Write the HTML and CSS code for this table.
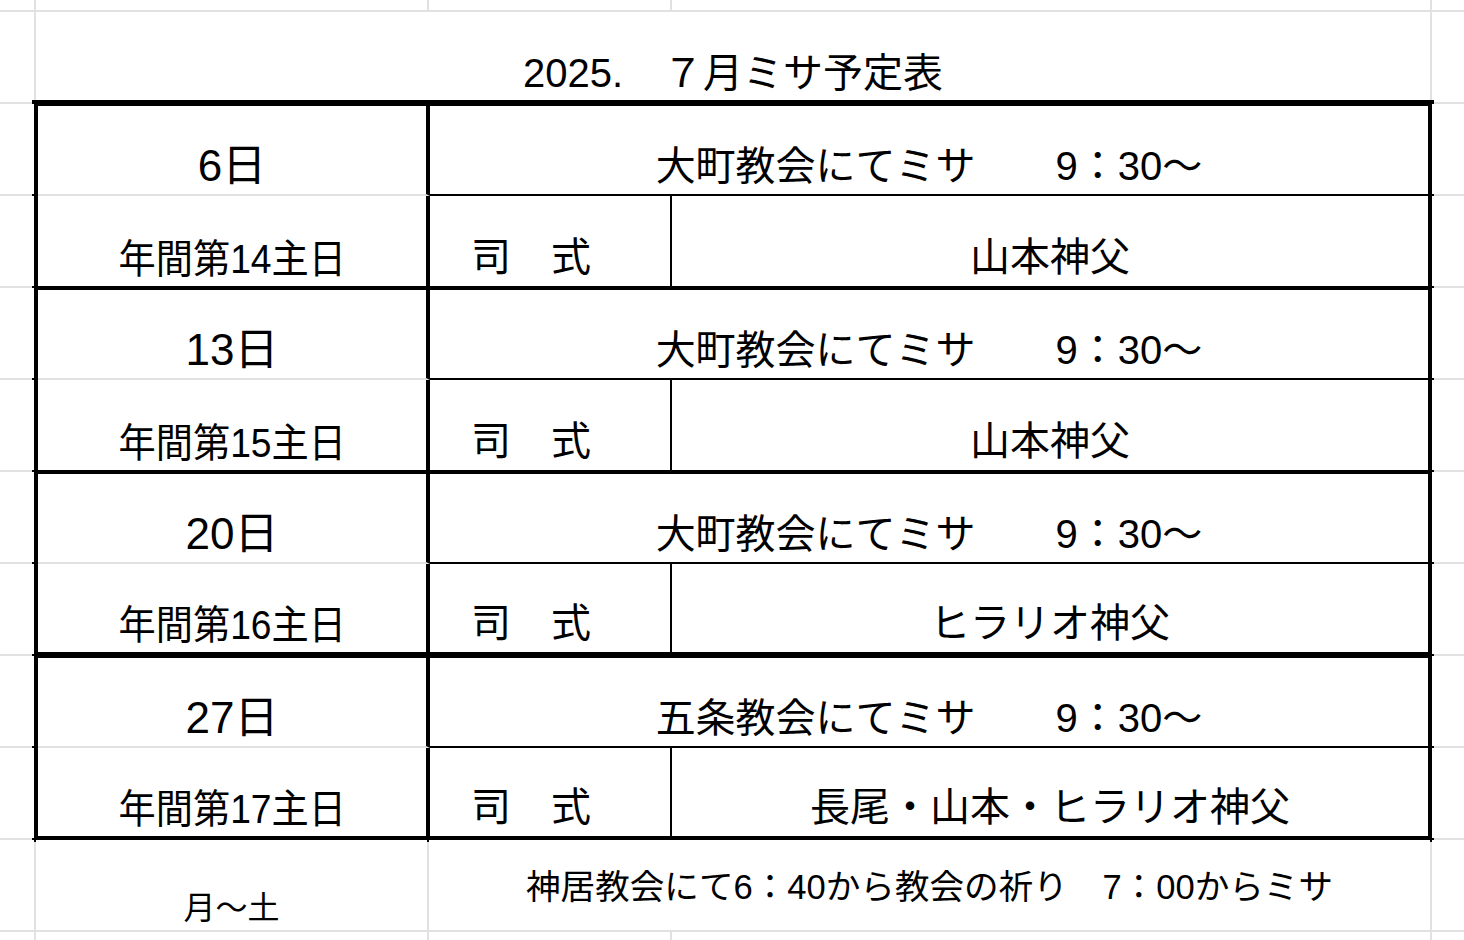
FILE: index.html
```html
<!DOCTYPE html>
<html lang="ja">
<head>
<meta charset="utf-8">
<title>2025. ７月ミサ予定表</title>
<link rel="stylesheet" href="styles.css">
</head>
<body>
<div class="sheet">
  <div class="cell"></div><div class="cell"></div><div class="cell"></div><div class="cell"></div><div class="cell"></div>

  <div class="cell"></div>
  <div class="cell title"><span>2025.　７月ミサ予定表</span></div>
  <div class="cell"></div>

  <div class="schedule">
    <div class="day">
      <div class="date">6日</div>
      <div class="mass">大町教会にてミサ　　9：30～</div>
      <div class="week"><span class="week-text">年間第14主日</span></div>
      <div class="role">司　式</div>
      <div class="priest">山本神父</div>
    </div>
    <div class="day">
      <div class="date">13日</div>
      <div class="mass">大町教会にてミサ　　9：30～</div>
      <div class="week"><span class="week-text">年間第15主日</span></div>
      <div class="role">司　式</div>
      <div class="priest">山本神父</div>
    </div>
    <div class="day day-short day-heavy">
      <div class="date">20日</div>
      <div class="mass">大町教会にてミサ　　9：30～</div>
      <div class="week"><span class="week-text">年間第16主日</span></div>
      <div class="role">司　式</div>
      <div class="priest">ヒラリオ神父</div>
    </div>
    <div class="day day-short day-last">
      <div class="date">27日</div>
      <div class="mass">五条教会にてミサ　　9：30～</div>
      <div class="week"><span class="week-text">年間第17主日</span></div>
      <div class="role">司　式</div>
      <div class="priest">長尾・山本・ヒラリオ神父</div>
    </div>
  </div>

  <div class="cell"></div><div class="cell"></div>
  <div class="cell"></div><div class="cell"></div>
  <div class="cell"></div><div class="cell"></div>
  <div class="cell"></div><div class="cell"></div>
  <div class="cell"></div><div class="cell"></div>
  <div class="cell"></div><div class="cell"></div>
  <div class="cell"></div><div class="cell"></div>
  <div class="cell"></div><div class="cell"></div>

  <div class="cell"></div>
  <div class="cell weekday">月～土</div>
  <div class="cell note">神居教会にて6：40から教会の祈り　7：00からミサ</div>
  <div class="cell"></div>

  <div class="cell"></div><div class="cell"></div><div class="cell"></div><div class="cell"></div><div class="cell"></div>
</div>
</body>
</html>
```
FILE: styles.css
```css
*, *::before, *::after { box-sizing: border-box; }

html, body {
  margin: 0;
  padding: 0;
  background: #ffffff;
}

.sheet {
  width: 1464px;
  height: 940px;
  overflow: hidden;
  display: grid;
  grid-template-columns: 34px 391px 241px 758px 1fr;
  grid-template-rows: 10px 90px repeat(8, 90px) 90px 1fr;
  gap: 2px;
  background: #e1e1e1;
  font-family: "Liberation Sans", "Noto Sans CJK JP", sans-serif;
  color: #000;
  line-height: 1;
}

.cell {
  background: #ffffff;
}

.title {
  grid-column: span 3;
  display: flex;
  align-items: flex-end;
  justify-content: center;
  font-size: 40px;
  padding-bottom: 9px;
  white-space: nowrap;
}

.weekday {
  display: flex;
  align-items: flex-end;
  justify-content: center;
  font-size: 32px;
  padding-bottom: 6px;
}

.note {
  grid-column: span 2;
  display: flex;
  align-items: flex-end;
  justify-content: center;
  font-size: 34.6px;
  padding-bottom: 25px;
  white-space: nowrap;
}

.schedule {
  grid-column: 2 / 5;
  grid-row: 3 / 11;
  margin: -4px;
  border: 6px solid #000;
  background: #ffffff;
  display: flex;
  flex-direction: column;
}

.day {
  display: grid;
  grid-template-columns: 392px 242px 1fr;
  grid-template-rows: 90px 90px;
  border-bottom: 4px solid #000;
}

.day-short {
  grid-template-rows: 90px 88px;
}

.day-heavy {
  border-bottom-width: 6px;
}

.day-last {
  border-bottom: 0;
}

.date,
.mass,
.week,
.role,
.priest {
  display: flex;
  align-items: flex-end;
  justify-content: center;
  white-space: nowrap;
}

.date {
  grid-column: 1;
  grid-row: 1;
  border-right: 4px solid #000;
  border-bottom: 2px solid #e1e1e1;
  font-size: 44px;
  padding-bottom: 6px;
}

.mass {
  grid-column: 2 / 4;
  grid-row: 1;
  border-bottom: 2px solid #000;
  font-size: 40px;
  padding-bottom: 8px;
}

.week {
  grid-column: 1;
  grid-row: 2;
  border-right: 4px solid #000;
  font-size: 40px;
  padding-bottom: 7px;
}

.week-text {
  display: inline-block;
  transform: scaleX(0.93);
}

.role {
  grid-column: 2;
  grid-row: 2;
  border-right: 2px solid #000;
  justify-content: flex-start;
  padding-left: 41px;
  font-size: 40px;
  padding-bottom: 9px;
}

.priest {
  grid-column: 3;
  grid-row: 2;
  font-size: 40px;
  padding-bottom: 9px;
}
```
